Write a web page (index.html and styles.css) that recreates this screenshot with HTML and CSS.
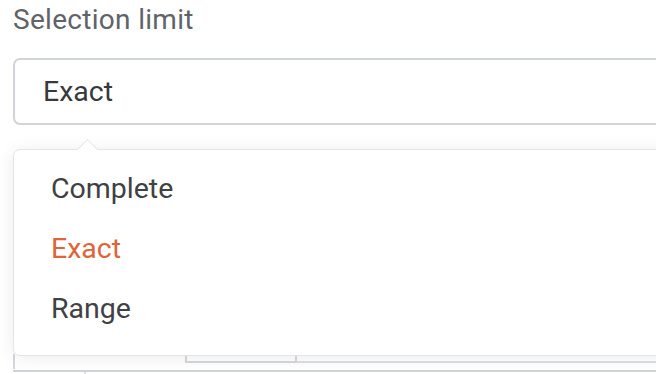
FILE: index.html
```html
<!DOCTYPE html>
<html>
<head>
<meta charset="utf-8">
<link rel="stylesheet" href="styles.css">
</head>
<body>
<div class="page">
  <div class="field">
    <div class="label">Selection limit</div>
    <div class="select">Exact</div>
  </div>
  <div class="under">
    <div class="under-top">
      <div class="under-left"></div>
      <div class="under-tab"></div>
      <div class="under-rest"></div>
    </div>
    <div class="under-bottom">
      <div class="under-cell"></div>
    </div>
  </div>
  <div class="menu">
    <div class="item">Complete</div>
    <div class="item active">Exact</div>
    <div class="item">Range</div>
  </div>
</div>
</body>
</html>
```

FILE: styles.css
```css
html, body {
  margin: 0;
  padding: 0;
  background: #ffffff;
  overflow: hidden;
}
.page {
  position: relative;
  width: 656px;
  height: 374px;
  overflow: hidden;
  font-family: Roboto, "Liberation Sans", sans-serif;
}
.field {
  padding-left: 13px;
}
.label {
  font-size: 28px;
  line-height: 40px;
  color: #606368;
  letter-spacing: 0.3px;
}
.select {
  margin-top: 18px;
  width: 720px;
  height: 63px;
  box-sizing: content-box;
  border: 2px solid #d0d3d8;
  border-radius: 7px;
  display: flex;
  align-items: center;
  padding-left: 28px;
  font-size: 28.5px;
  color: #38393c;
}
.under {
  margin-top: 229px;
  padding-left: 13px;
}
.under-top {
  display: flex;
  height: 16px;
}
.under-left {
  width: 2px;
  background: #d5d8dc;
  height: 15px;
}
.under-tab {
  margin-left: 170px;
  width: 108px;
  border-left: 2px solid #d5d8dc;
  border-right: 2px solid #d5d8dc;
  border-bottom: 2px solid #d5d8dc;
  height: 6px;
  margin-top: 1px;
}
.under-rest {
  flex: 1;
  border-bottom: 2px solid #dcdfe3;
  height: 6px;
  margin-top: 1px;
}
.under-bottom {
  border-top: 2px solid #d0d3d8;
  height: 10px;
  display: flex;
}
.under-cell {
  width: 71px;
  border-right: 2px solid #dcdfe3;
}
.menu {
  position: absolute;
  left: 13px;
  top: 149px;
  width: 720px;
  height: 188px;
  padding: 9px 0 8px;
  box-sizing: content-box;
  background: #ffffff;
  border: 1px solid #e3e5e9;
  border-radius: 7px;
  box-shadow: 0 2px 18px rgba(0, 0, 0, 0.08);
}
.menu::before {
  content: "";
  position: absolute;
  left: 66px;
  top: -8px;
  width: 14px;
  height: 14px;
  background: #ffffff;
  border-left: 1px solid #e3e5e9;
  border-top: 1px solid #e3e5e9;
  transform: rotate(45deg);
}
.item {
  height: 60px;
  line-height: 60px;
  padding-left: 37px;
  font-size: 28.5px;
  color: #404144;
}
.item.active {
  color: #df6438;
}
```
